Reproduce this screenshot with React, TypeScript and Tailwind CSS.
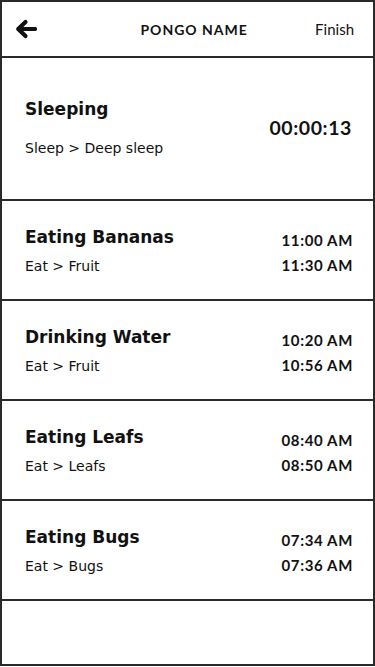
import React from 'react';

interface Activity {
  title: string;
  path: string;
  start: string;
  end: string;
}

const activities: Activity[] = [
  { title: 'Eating Bananas', path: 'Eat > Fruit', start: '11:00 AM', end: '11:30 AM' },
  { title: 'Drinking Water', path: 'Eat > Fruit', start: '10:20 AM', end: '10:56 AM' },
  { title: 'Eating Leafs', path: 'Eat > Leafs', start: '08:40 AM', end: '08:50 AM' },
  { title: 'Eating Bugs', path: 'Eat > Bugs', start: '07:34 AM', end: '07:36 AM' },
];

const BackArrow = () => (
  <svg width="22" height="20" viewBox="0 0 22 20" fill="none" stroke="currentColor" strokeWidth="4.2" strokeLinecap="round" strokeLinejoin="round">
    <path d="M20 10H4" />
    <path d="M10.5 3L3.2 10l7.3 7" />
  </svg>
);

const App: React.FC = () => {
  return (
    <div className="w-[375px] h-[667px] bg-white text-[#111] font-['Lato',_'Noto_Sans',_sans-serif]">
      <div className="h-[666px] border-2 border-[#2a2a2a] flex flex-col">
        {/* Header */}
        <div className="h-[56px] shrink-0 border-b-2 border-[#2a2a2a] flex items-center justify-between pl-[13px] pr-[19px]">
          <button className="w-[26px] h-[26px] flex items-center justify-start">
            <BackArrow />
          </button>
          <h1 className="text-[14px] font-bold tracking-[0.07em] pl-[32px]">PONGO NAME</h1>
          <button className="text-[15px]">Finish</button>
        </div>

        {/* Current activity */}
        <div className="h-[143px] shrink-0 border-b-2 border-[#2a2a2a] flex items-center justify-between pl-[23px] pr-[21px] pb-[3px]">
          <div className="flex flex-col gap-[19px] font-['DejaVu_Sans',_sans-serif]">
            <h2 className="text-[17px] font-bold leading-[22px]">Sleeping</h2>
            <p className="text-[14px] leading-[18px]">Sleep &gt; Deep sleep</p>
          </div>
          <span className="text-[19.5px] font-bold tracking-[0.03em] mb-[-1px]">00:00:13</span>
        </div>

        {/* History */}
        {activities.map((a) => (
          <div key={a.title} className="h-[100px] shrink-0 border-b-2 border-[#2a2a2a] flex items-center justify-between pl-[23px] pr-[20px]">
            <div className="flex flex-col gap-[9px] font-['DejaVu_Sans',_sans-serif]">
              <h3 className="text-[17px] font-bold leading-[22px]">{a.title}</h3>
              <p className="text-[14px] leading-[18px]">{a.path}</p>
            </div>
            <div className="flex flex-col items-end gap-[5px] mt-[4px] tracking-[0.04em]">
              <span className="text-[15px] font-bold leading-[20px]">{a.start}</span>
              <span className="text-[15px] font-bold leading-[20px]">{a.end}</span>
            </div>
          </div>
        ))}
      </div>
    </div>
  );
};

export default App;
